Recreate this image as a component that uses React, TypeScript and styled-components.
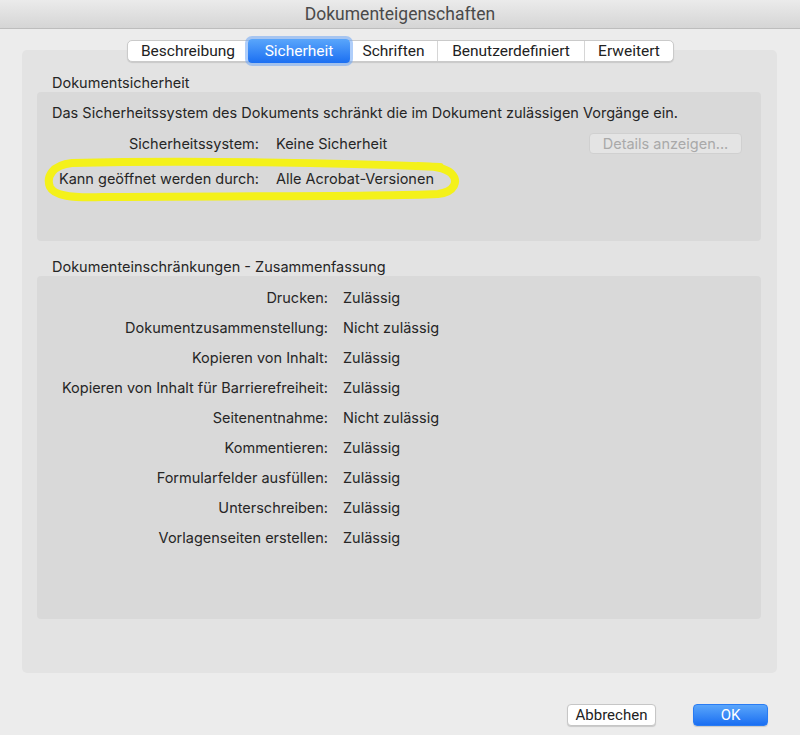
import React from 'react';
import styled, { createGlobalStyle } from 'styled-components';

const GlobalStyle = createGlobalStyle`
  html, body {
    margin: 0;
    padding: 0;
    background: #ececec;
  }
  body {
    font-family: Inter, "Noto Sans", sans-serif;
    color: #262626;
    -webkit-font-smoothing: antialiased;
  }
`;

const tabs = ['Beschreibung', 'Sicherheit', 'Schriften', 'Benutzerdefiniert', 'Erweitert'];
const tabWidths = [120, 102, 87, 147, 89];

const restrictions: [string, string][] = [
  ['Drucken', 'Zulässig'],
  ['Dokumentzusammenstellung', 'Nicht zulässig'],
  ['Kopieren von Inhalt', 'Zulässig'],
  ['Kopieren von Inhalt für Barrierefreiheit', 'Zulässig'],
  ['Seitenentnahme', 'Nicht zulässig'],
  ['Kommentieren', 'Zulässig'],
  ['Formularfelder ausfüllen', 'Zulässig'],
  ['Unterschreiben', 'Zulässig'],
  ['Vorlagenseiten erstellen', 'Zulässig'],
];

export default function App() {
  return (
    <>
      <GlobalStyle />
      <Window>
        <TitleBar>Dokumenteigenschaften</TitleBar>
        <Content>
          <TabBar>
            {tabs.map((t, i) => (
              <Tab key={t} $active={i === 1} $divider={i > 2} style={{ width: tabWidths[i] }}>
                {t}
              </Tab>
            ))}
          </TabBar>
          <Panel>
            <SectionLabel>Dokumentsicherheit</SectionLabel>
            <SecurityBox>
              <Intro>Das Sicherheitssystem des Dokuments schränkt die im Dokument zulässigen Vorgänge ein.</Intro>
              <SecurityRow>
                <Label>Sicherheitssystem:</Label>
                <Value>Keine Sicherheit</Value>
                <DetailsButton disabled>Details anzeigen...</DetailsButton>
              </SecurityRow>
              <SecurityRow>
                <Label>Kann geöffnet werden durch:</Label>
                <Value>Alle Acrobat-Versionen</Value>
                {/* hand-drawn marker loop around the row */}
                <Marker viewBox="0 0 420 45" width="420" height="45">
                  <path
                    d="M398 10 C300 6, 150 3, 30 6 C10 8, 4 20, 8 30 C12 39, 30 41, 60 40 C180 39, 330 40, 396 37 C413 35, 417 24, 409 16 C403 11, 391 9, 376 9"
                    fill="none"
                    stroke="#f4f11a"
                    strokeWidth="8"
                    strokeLinecap="round"
                    strokeLinejoin="round"
                  />
                </Marker>
              </SecurityRow>
            </SecurityBox>

            <SectionLabel>Dokumenteinschränkungen - Zusammenfassung</SectionLabel>
            <SummaryBox>
              {restrictions.map(([k, v]) => (
                <SummaryRow key={k}>
                  <Label>{k}:</Label>
                  <Value>{v}</Value>
                </SummaryRow>
              ))}
            </SummaryBox>
          </Panel>
          <Footer>
            <PushButton>Abbrechen</PushButton>
            <PushButton $primary>OK</PushButton>
          </Footer>
        </Content>
      </Window>
    </>
  );
}

const Window = styled.div`
  width: 800px;
  height: 735px;
  display: flex;
  flex-direction: column;
  background: #ececec;
  overflow: hidden;
`;

const TitleBar = styled.div`
  height: 28px;
  flex-shrink: 0;
  display: flex;
  align-items: center;
  justify-content: center;
  background: linear-gradient(#ebebeb, #d5d5d5);
  border-bottom: 1px solid #bdbdbd;
  font-family: Roboto, sans-serif;
  font-size: 17.5px;
  color: #4a4a4a;
`;

const Content = styled.div`
  display: flex;
  flex-direction: column;
  padding: 11px 23px 0 22px;
`;

const TabBar = styled.div`
  align-self: flex-start;
  margin-left: 105px;
  display: flex;
  height: 22px;
  background: #fff;
  border: 1px solid #cacaca;
  border-radius: 5px;
  box-shadow: 0 1px 1px rgba(0, 0, 0, 0.12);
  margin-bottom: -12px;
  position: relative;
  z-index: 1;
  box-sizing: border-box;
`;

const Tab = styled.div<{ $active?: boolean; $divider?: boolean }>`
  display: flex;
  align-items: center;
  justify-content: center;
  font-family: Roboto, sans-serif;
  font-size: 15.5px;
  color: ${p => (p.$active ? '#fff' : '#222')};
  border-left: ${p => (p.$divider ? '1px solid #d6d6d6' : 'none')};
  box-sizing: border-box;
  ${p =>
    p.$active &&
    `
    background: linear-gradient(#5aa6fb, #1b6ff2);
    border-radius: 4px;
    margin: -2px 0;
    box-shadow: 0 0 0 3px rgba(110, 165, 245, 0.55);
  `}
`;

const Panel = styled.div`
  height: 623px;
  box-sizing: border-box;
  background: #e3e3e3;
  border-radius: 5px;
  padding: 24px 16px 0 15px;
  display: flex;
  flex-direction: column;
`;

const SectionLabel = styled.div`
  font-size: 14.5px;
  line-height: 17px;
  padding-left: 15px;
  margin-bottom: 1px;
`;

const Box = styled.div`
  background: #d9d9d9;
  border-radius: 4px;
  box-sizing: border-box;
`;

const SecurityBox = styled(Box)`
  height: 149px;
  padding: 12px 19px 0 0;
  margin-bottom: 17px;
  display: flex;
  flex-direction: column;
  gap: 12px;
`;

const Intro = styled.div`
  font-size: 14.5px;
  line-height: 17px;
  padding-left: 15px;
`;

const SecurityRow = styled.div`
  position: relative;
  display: grid;
  grid-template-columns: 222px 1fr auto;
  column-gap: 17px;
  align-items: center;
  height: 21px;
  & + & {
    margin-top: 2px;
  }
`;

const Label = styled.div`
  text-align: right;
  font-size: 14.5px;
  white-space: nowrap;
`;

const Value = styled.div`
  font-size: 14.5px;
  white-space: nowrap;
`;

const DetailsButton = styled.button`
  width: 153px;
  height: 21px;
  background: #e4e4e4;
  border: 1px solid #d0d0d0;
  border-radius: 4px;
  font-family: Inter, sans-serif;
  font-size: 14.5px;
  color: #a9a9a9;
  padding: 0;
`;

const Marker = styled.svg`
  position: absolute;
  left: 5px;
  top: -11px;
  pointer-events: none;
`;

const SummaryBox = styled(Box)`
  height: 343px;
  padding-top: 6px;
  display: flex;
  flex-direction: column;
`;

const SummaryRow = styled.div`
  display: grid;
  grid-template-columns: 291px 1fr;
  column-gap: 15px;
  height: 30px;
  align-items: center;
`;

const Footer = styled.div`
  display: flex;
  justify-content: flex-end;
  gap: 37px;
  padding: 31px 9px 0 0;
`;

const PushButton = styled.button<{ $primary?: boolean }>`
  height: 22px;
  padding: 0;
  width: ${p => (p.$primary ? '75px' : '89px')};
  border-radius: 4px;
  font-family: Roboto, sans-serif;
  font-size: 15px;
  border: 1px solid ${p => (p.$primary ? '#2a7cf3' : '#c6c6c6')};
  background: ${p => (p.$primary ? 'linear-gradient(#5aa6fb, #1b6ff2)' : '#fff')};
  color: ${p => (p.$primary ? '#fff' : '#222')};
  box-shadow: 0 1px 1px rgba(0, 0, 0, 0.15);
`;
